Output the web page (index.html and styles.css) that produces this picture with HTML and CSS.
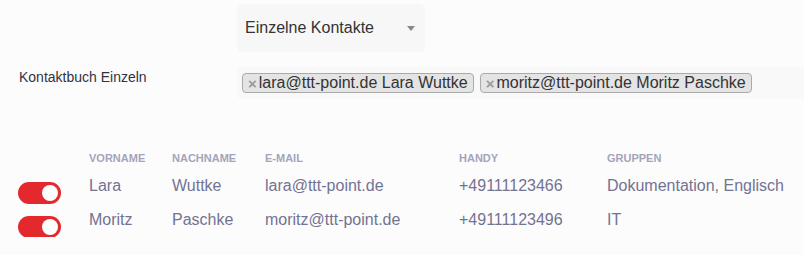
FILE: index.html
```html
<!DOCTYPE html>
<html lang="de">
<head>
    <meta charset="UTF-8">
    <meta name="viewport" content="width=device-width, initial-scale=1.0">
    <title>Kontaktbuch</title>
    <link rel="stylesheet" href="styles.css">
</head>
<body>
    <div class="form-row select-row">
        <div class="select-box">
            <span>Einzelne Kontakte</span>
            <span class="caret"></span>
        </div>
    </div>

    <div class="form-row contacts-row">
        <label class="row-label">Kontaktbuch Einzeln</label>
        <div class="tag-box">
            <span class="tag"><span class="tag-x">&times;</span>lara@ttt-point.de Lara Wuttke</span>
            <span class="tag"><span class="tag-x">&times;</span>moritz@ttt-point.de Moritz Paschke</span>
        </div>
    </div>

    <div class="contacts-table">
        <div class="th"></div>
        <div class="th">Vorname</div>
        <div class="th">Nachname</div>
        <div class="th">E-Mail</div>
        <div class="th">Handy</div>
        <div class="th">Gruppen</div>

        <div class="td"><span class="toggle"></span></div>
        <div class="td">Lara</div>
        <div class="td">Wuttke</div>
        <div class="td">lara@ttt-point.de</div>
        <div class="td">+49111123466</div>
        <div class="td">Dokumentation, Englisch</div>

        <div class="td"><span class="toggle"></span></div>
        <div class="td">Moritz</div>
        <div class="td">Paschke</div>
        <div class="td">moritz@ttt-point.de</div>
        <div class="td">+49111123496</div>
        <div class="td">IT</div>
    </div>
</body>
</html>
```

FILE: styles.css
```css
body {
    font-family: "Liberation Sans", Arial, sans-serif;
    margin: 0;
    padding: 0;
    background-color: #fcfcfd;
    color: #333;
}
.form-row {
    display: flex;
}
.select-row {
    padding: 4px 0 0 237px;
}
.select-box {
    width: 188px;
    height: 48px;
    box-sizing: border-box;
    padding: 0 10px 0 8px;
    background: #f7f7f7;
    border-radius: 6px;
    display: flex;
    align-items: center;
    justify-content: space-between;
    font-size: 16px;
    color: #333;
}
.caret {
    width: 0;
    height: 0;
    border-left: 4px solid transparent;
    border-right: 4px solid transparent;
    border-top: 5px solid #888;
}
.contacts-row {
    margin-top: 15px;
}
.row-label {
    width: 218px;
    padding: 2px 0 0 19px;
    font-size: 14px;
    line-height: 16px;
    color: #33333f;
}
.tag-box {
    flex: 1;
    height: 32px;
    box-sizing: border-box;
    padding: 6px 5px;
    background: #f9f9f9;
    border-radius: 4px 0 0 4px;
    display: flex;
    gap: 6px;
}
.tag {
    display: inline-flex;
    align-items: center;
    height: 20px;
    box-sizing: border-box;
    padding: 0 5px 0 5px;
    background: #e4e4e4;
    border: 1px solid #aaa;
    border-radius: 4px;
    font-size: 16px;
    color: #333;
}
.tag-x {
    color: #999;
    font-weight: bold;
    font-size: 15px;
    margin-right: 2px;
}
.contacts-table {
    margin-top: 49px;
    padding-left: 18px;
    display: grid;
    grid-template-columns: 71px 83px 93px 194px 148px auto;
}
.th {
    height: 20px;
    line-height: 20px;
    margin-bottom: 1px;
    font-size: 11px;
    font-weight: bold;
    text-transform: uppercase;
    color: #a4a4b9;
}
.td {
    height: 34px;
    line-height: 34px;
    font-size: 16px;
    color: #737391;
}
.toggle {
    display: block;
    position: relative;
    width: 43px;
    height: 22px;
    margin-top: 13px;
    border-radius: 11px;
    background: #e3292d;
}
.toggle::after {
    content: "";
    position: absolute;
    top: 3px;
    right: 3px;
    width: 16px;
    height: 16px;
    border-radius: 50%;
    background: #fff;
}
```
